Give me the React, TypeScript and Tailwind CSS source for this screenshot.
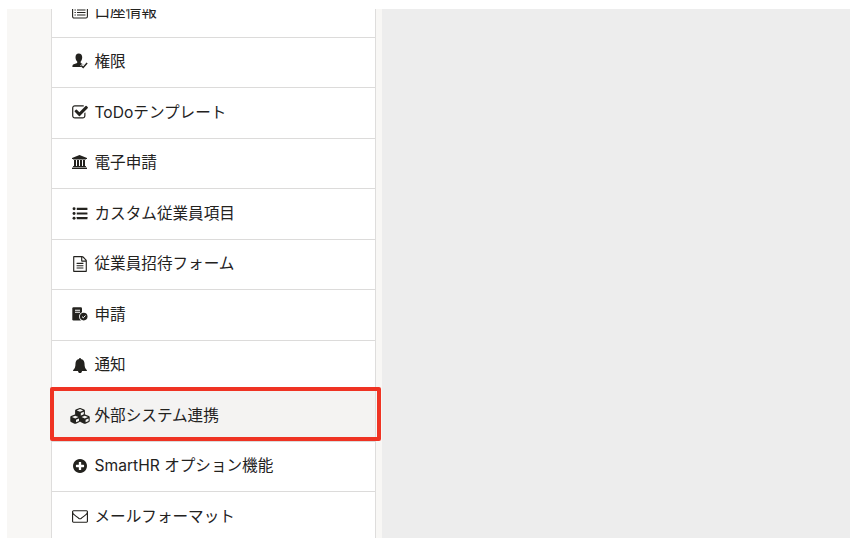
import React from "react";

const iconClass = "block w-full h-full";

const BankAccount = () => (
  <svg viewBox="0 0 16 14" className={iconClass} fill="none" stroke="currentColor">
    <rect x="0.6" y="0.6" width="14.8" height="12.4" rx="1.4" strokeWidth="1.1" />
    <path d="M.6 2.2h14.8" strokeWidth="2" />
    <path d="M2.5 5h1.3M5 5h8.5M2.5 7.5h1.3M5 7.5h8.5M2.5 10h1.3M5 10h8.5" strokeWidth="1.1" />
  </svg>
);

const UserCheck = () => (
  <svg viewBox="0 0 16 16" className={iconClass} fill="currentColor">
    <path d="M6.7.5C4.6.5 3.5 2 3.5 4.3c0 1.8.7 3.3 1.7 4.100v1.500L1.8 11.2C.8 11.6.4 12.2.4 13.9h9l-1.100-1.300 1.900-1.700 1 .9.4-.3-2.900-1.400V8.400c.9-.8 1.500-2.300 1.500-4.100C10.200 2 8.900.5 6.700.5Z" />
    <path d="m9.200 12.600 2 1.900 3.900-4.400" fill="none" stroke="currentColor" strokeWidth="1.500" />
  </svg>
);

const CheckSquare = () => (
  <svg viewBox="0 0 1792 1792" className={iconClass} fill="currentColor">
    <path d="M1472 930v318q0 119-84.5 203.5t-203.5 84.5h-832q-119 0-203.5-84.5t-84.5-203.5v-832q0-119 84.5-203.5t203.5-84.5h832q63 0 117 25 15 7 18 23 3 17-9 29l-49 49q-10 10-23 10-3 0-9-2-23-6-45-6h-832q-66 0-113 47t-47 113v832q0 66 47 113t113 47h832q66 0 113-47t47-113v-254q0-13 9-22l64-64q10-10 23-10 6 0 12 3 20 8 20 29zm231-489l-814 814q-24 24-57 24t-57-24l-430-430q-24-24-24-57t24-57l110-110q24-24 57-24t57 24l263 263 647-647q24-24 57-24t57 24l110 110q24 24 24 57t-24 57z" />
  </svg>
);

const Institution = () => (
  <svg viewBox="0 0 15 14" className={iconClass} fill="currentColor">
    <path d="m7.500 0 7.500 3v1h-1a.5.5 0 0 1-.5.500h-12A.5.5 0 0 1 1 4H0V3ZM2 5h2v6h1V5h2v6h1V5h2v6h1V5h2v6h.5a.5.5 0 0 1 .5.500v.5H1v-.5a.5.5 0 0 1 .5-.500H2ZM.5 12.500h14a.5.5 0 0 1 .5.500v1H0v-1a.5.5 0 0 1 .5-.500Z" />
  </svg>
);

const BulletList = () => (
  <svg viewBox="0 0 16 14" className={iconClass} fill="currentColor">
    <circle cx="1.600" cy="2" r="1.600" />
    <circle cx="1.600" cy="7" r="1.600" />
    <circle cx="1.600" cy="12" r="1.600" />
    <rect x="4.500" y=".900" width="11.500" height="2.300" rx=".200" />
    <rect x="4.500" y="5.900" width="11.500" height="2.300" rx=".200" />
    <rect x="4.500" y="10.900" width="11.500" height="2.300" rx=".200" />
  </svg>
);

const FileText = () => (
  <svg viewBox="128 0 1536 1792" className={iconClass} fill="currentColor">
    <path d="M1596 380q28 28 48 76t20 88v1152q0 40-28 68t-68 28h-1344q-40 0-68-28t-28-68v-1600q0-40 28-68t68-28h896q40 0 88 20t76 48zm-444-244v376h376q-10-29-22-41l-313-313q-12-12-41-22zm384 1528v-1024h-416q-40 0-68-28t-28-68v-416h-768v1536h1280zm-1024-864q0-14 9-23t23-9h704q14 0 23 9t9 23v64q0 14-9 23t-23 9h-704q-14 0-23-9t-9-23v-64zm736 224q14 0 23 9t9 23v64q0 14-9 23t-23 9h-704q-14 0-23-9t-9-23v-64q0-14 9-23t23-9h704zm0 256q14 0 23 9t9 23v64q0 14-9 23t-23 9h-704q-14 0-23-9t-9-23v-64q0-14 9-23t23-9h704z" />
  </svg>
);

const Request = () => (
  <svg viewBox="0 0 16 14" className={iconClass}>
    <path d="M1.500.3h7.300q1.200 0 1.200 1.200v10.800q0 1.200-1.200 1.200H1.500q-1.200 0-1.200-1.200V1.500Q.3.3 1.500.3Z" fill="currentColor" />
    <path d="M3 3.200h5M3 5.300h5" stroke="white" strokeWidth="1.100" />
    <circle cx="11.700" cy="9.600" r="4.700" fill="white" />
    <circle cx="11.700" cy="9.600" r="3.800" fill="currentColor" />
    <path d="m10 9.600 1.300 1.200 2.200-2.300" fill="none" stroke="white" strokeWidth="1" />
  </svg>
);

const Bell = () => (
  <svg viewBox="0 0 14 15" className={iconClass} fill="currentColor">
    <path d="M7 0a.9.9 0 0 1 .9 1.100c2.300.4 3.600 2.200 3.600 4.500 0 3.600.8 5.300 2.500 6.600 0 .5-.4.900-.9.900H9A2 2 0 0 1 5 13.100H.9a.9.9 0 0 1-.9-.9c1.700-1.300 2.500-3 2.500-6.600 0-2.300 1.300-4.100 3.600-4.500A.9.9 0 0 1 7 0Z" />
  </svg>
);

const Cube = ({ x, y }: { x: number; y: number }) => (
  <g transform={`translate(${x} ${y})`}>
    <path d="M4.500 0q.4-.2.800 0L9 1.500q.8.300.8 1v3.900q0 .7-.6 1L5.600 9.100q-.7.300-1.400 0L.6 7.400Q0 7.100 0 6.400V2.500q0-.7.7-1Z" fill="currentColor" />
    <path d="M4.900 1.100 8.100 2.500 4.900 3.800 1.700 2.500ZM5.700 5.100 8.700 3.800V6.300L5.700 7.700Z" className="fill-[#f4f3f2]" />
  </g>
);

const Cubes = () => (
  <svg viewBox="0 0 20 16" className={iconClass}>
    <Cube x={5.1} y={0} />
    <Cube x={0.3} y={6.6} />
    <Cube x={9.900} y={6.6} />
  </svg>
);

const PlusCircle = () => (
  <svg viewBox="128 128 1536 1536" className={iconClass} fill="currentColor">
    <path d="M1344 960v-128q0-26-19-45t-45-19h-256v-256q0-26-19-45t-45-19h-128q-26 0-45 19t-19 45v256h-256q-26 0-45 19t-19 45v128q0 26 19 45t45 19h256v256q0 26 19 45t45 19h128q26 0 45-19t19-45v-256h256q26 0 45-19t19-45zm320-64q0 209-103 385.5t-279.5 279.5-385.5 103-385.5-103-279.5-279.5-103-385.5 103-385.5 279.5-279.5 385.5-103 385.5 103 279.5 279.5 103 385.5z" />
  </svg>
);

const Envelope = () => (
  <svg viewBox="0 256 1792 1408" className={iconClass} fill="currentColor">
    <path d="M1664 1504v-768q-32 36-69 66-268 206-426 338-51 43-83 67t-86.5 48.5-102.5 24.5h-2q-48 0-102.5-24.5t-86.5-48.5-83-67q-158-132-426-338-37-30-69-66v768q0 13 9.5 22.5t22.5 9.5h1472q13 0 22.5-9.5t9.5-22.5zm0-1051v-24.5l-.5-13-3-12.5-5.500-9-9-7.5-14-2.5h-1472q-13 0-22.5 9.5t-9.5 22.5q0 168 147 284 193 152 401 317 6 5 35 29.5t46 37.5 44.5 31.5 50.5 27.5 43 9h2q20 0 43-9t50.5-27.5 44.5-31.5 46-37.5 35-29.5q208-165 401-317 54-43 100.5-115.5t46.5-131.5zm128-37v1088q0 66-47 113t-113 47h-1472q-66 0-113-47t-47-113v-1088q0-66 47-113t113-47h1472q66 0 113 47t47 113z" />
  </svg>
);

const items = [
  { label: "口座情報", Icon: BankAccount, size: "w-4 h-3.5" },
  { label: "権限", Icon: UserCheck, size: "w-4 h-4 -translate-y-px" },
  { label: "ToDoテンプレート", Icon: CheckSquare, size: "w-[17px] h-[17px] translate-x-[0.5px]" },
  { label: "電子申請", Icon: Institution, size: "w-[15px] h-3.5 -translate-y-px" },
  { label: "カスタム従業員項目", Icon: BulletList, size: "w-4 h-[13px]" },
  { label: "従業員招待フォーム", Icon: FileText, size: "w-3.5 h-4" },
  { label: "申請", Icon: Request, size: "w-4 h-3.5 -translate-y-px" },
  { label: "通知", Icon: Bell, size: "w-3.5 h-[15px]" },
  { label: "外部システム連携", Icon: Cubes, size: "w-5 h-4", active: true },
  { label: "SmartHR オプション機能", Icon: PlusCircle, size: "w-3.5 h-3.5" },
  { label: "メールフォーマット", Icon: Envelope, size: "w-4 h-[13px]" },
];

export default function App() {
  return (
    <div className="h-[548px] w-[860px] overflow-hidden bg-white pl-[7px] pt-[9px] font-[Inter,'Noto_Sans_CJK_JP',sans-serif] text-[#23221e]">
      <div className="flex h-[529px] w-[843px] overflow-hidden bg-[#f8f7f5]">
        <nav className="ml-[43.5px] w-[325px] shrink-0 border-x border-[#dedddc] bg-white">
          <div className="-mt-[22px]">
            {items.map(({ label, Icon, size, active }) => (
              <div
                key={label}
                className={`relative flex h-[50.53px] items-center border-b border-[#dcdbda] pl-[17.5px] ${active ? "bg-[#f4f3f2]" : ""}`}
              >
                <span className="flex w-[21px] shrink-0 items-center justify-center">
                  <span className={`shrink-0 ${size}`}><Icon /></span>
                </span>
                <span className="ml-[4.5px] whitespace-nowrap text-[15.6px] leading-6">{label}</span>
                {active && <span className="absolute -left-[1.5px] -top-[3.7px] h-[54px] w-[331px] rounded-[2px] border-4 border-[#ef3323]" />}
              </div>
            ))}
          </div>
        </nav>
        <div className="ml-[6px] flex-1 bg-[#ededed]" />
      </div>
    </div>
  );
}
